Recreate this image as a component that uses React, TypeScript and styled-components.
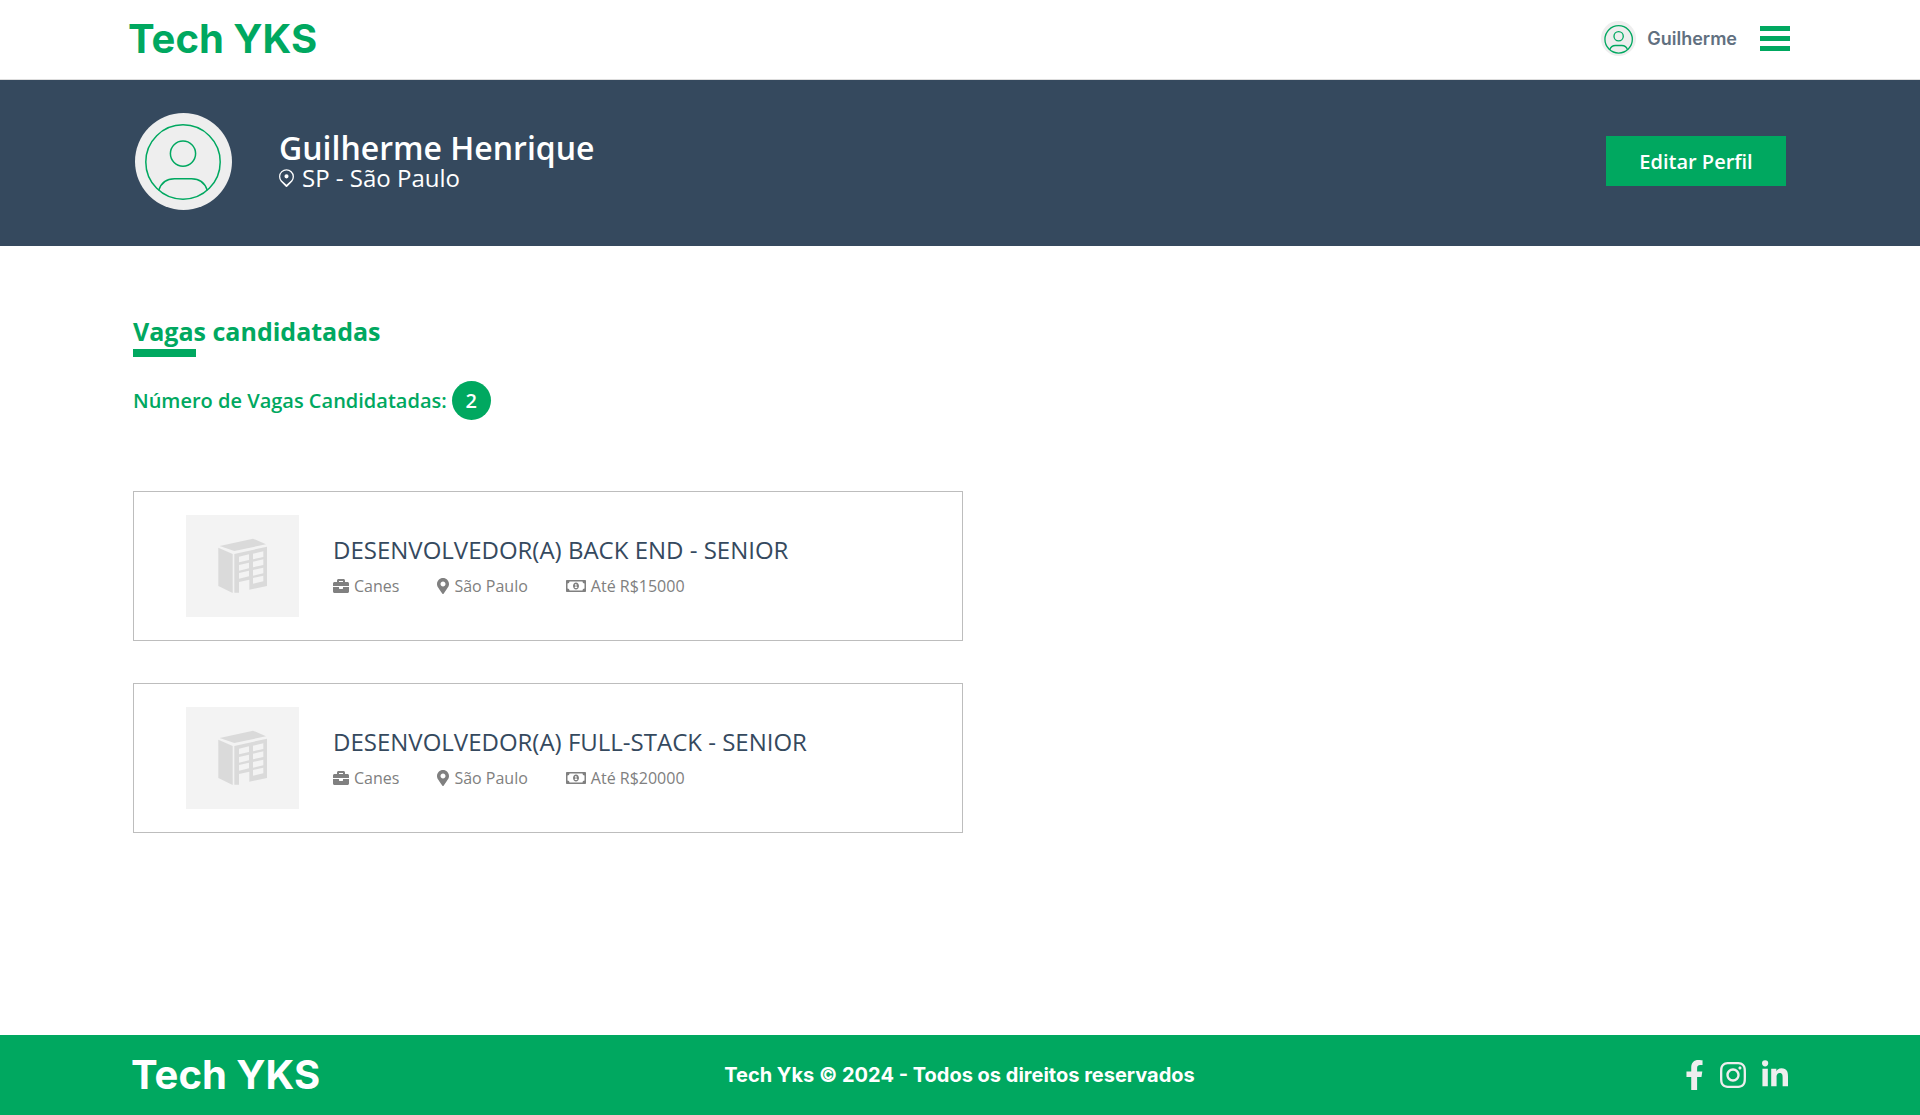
import React from "react";
import styled, { createGlobalStyle } from "styled-components";
import {
  FaBriefcase,
  FaFacebookF,
  FaInstagram,
  FaLinkedinIn,
  FaMapMarkerAlt,
  FaRegMoneyBillAlt,
} from "react-icons/fa";

const colors = {
  green: "#00a860",
  navy: "#35495e",
  slate: "#617080",
  grey: "#808080",
  light: "#eeeeee",
  line: "#bdbdbd",
};

const GlobalStyle = createGlobalStyle`
  *, *::before, *::after { box-sizing: border-box; }
  body {
    margin: 0;
    background: #fff;
    font-family: "Open Sans", sans-serif;
  }
  h1, h2, h3, p, ul { margin: 0; padding: 0; }
  button { border: 0; padding: 0; font-family: inherit; cursor: pointer; }
  a { color: inherit; text-decoration: none; }
  svg { display: block; flex-shrink: 0; }
`;

const Page = styled.div`
  display: flex;
  flex-direction: column;
  min-height: 100vh;
`;

const Header = styled.header`
  display: flex;
  align-items: center;
  justify-content: space-between;
  height: 80px;
  padding: 0 130px 2px 128px;
  border-bottom: 1px solid #dddddd;
`;

const Logo = styled.a<{ $color: string }>`
  font: 700 40px/48px Inter, sans-serif;
  && { color: ${(p) => p.$color}; }
`;

const UserMenu = styled.div`
  display: flex;
  align-items: center;
`;

const UserLink = styled.a`
  display: flex;
  align-items: center;
  gap: 11px;
  margin-right: 23px;
  font: 600 18px/24px Inter, sans-serif;
  && { color: ${colors.slate}; }
`;

const AvatarCircle = styled.span<{ $size: number }>`
  display: flex;
  align-items: center;
  justify-content: center;
  width: ${(p) => p.$size}px;
  height: ${(p) => p.$size}px;
  border-radius: 50%;
  background: ${colors.light};
`;

const MenuButton = styled.button`
  display: flex;
  flex-direction: column;
  gap: 5px;
  width: 30px;
  background: none;
`;

const MenuBar = styled.span`
  height: 5px;
  width: 100%;
  background: ${colors.green};
`;

const Banner = styled.section`
  display: flex;
  align-items: center;
  height: 166px;
  padding: 0 134px 4px 135px;
  background: ${colors.navy};
  color: #fff;
`;

const Identity = styled.div`
  flex: 1;
  margin-left: 47px;
  padding-top: 4px;
`;

const Name = styled.h1`
  font-size: 32px;
  font-weight: 600;
  line-height: 30px;
`;

const Place = styled.p`
  display: flex;
  align-items: center;
  gap: 8px;
  font-size: 24px;
  line-height: 30px;
`;

const EditButton = styled.button`
  width: 180px;
  height: 50px;
  background: ${colors.green};
  color: #fff;
  font-size: 20px;
  font-weight: 600;
`;

const Main = styled.main`
  flex: 1;
  padding: 68px 133px 80px;
`;

const Title = styled.h2`
  color: ${colors.green};
  font-size: 25px;
  font-weight: 700;
  line-height: 35px;

  &::after {
    content: "";
    display: block;
    width: 63px;
    height: 8px;
    background: ${colors.green};
  }
`;

const Counter = styled.p`
  display: flex;
  align-items: center;
  gap: 5px;
  margin-top: 24px;
  color: ${colors.green};
  font-size: 20px;
  font-weight: 600;
  line-height: 28px;
`;

const Count = styled.span`
  display: flex;
  align-items: center;
  justify-content: center;
  width: 39px;
  height: 39px;
  border-radius: 50%;
  background: ${colors.green};
  color: #fff;
`;

const JobList = styled.ul`
  display: flex;
  flex-direction: column;
  gap: 42px;
  max-width: 830px;
  margin-top: 71px;
  list-style: none;
`;

const JobCard = styled.li`
  display: flex;
  align-items: center;
  gap: 34px;
  height: 150px;
  padding: 0 52px;
  border: 1px solid ${colors.line};
`;

const Thumb = styled.div`
  width: 113px;
  height: 102px;
  background: #f3f3f3;
`;

const JobTitle = styled.h3`
  color: ${colors.navy};
  font-size: 24px;
  font-weight: 400;
  line-height: 32px;
`;

const Details = styled.div`
  display: flex;
  gap: 38px;
  margin-top: 8px;
`;

const Detail = styled.p<{ $icon: number }>`
  display: flex;
  align-items: center;
  gap: 5px;
  color: ${colors.grey};
  font-size: 16px;
  line-height: 24px;

  svg { width: ${(p) => p.$icon}px; height: 16px; }
`;

const Footer = styled.footer`
  display: grid;
  grid-template-columns: 1fr auto 1fr;
  align-items: center;
  height: 80px;
  padding: 0 132px 0 131px;
  background: ${colors.green};
`;

const Copyright = styled.p`
  color: #fff;
  font: 700 20px/24px Inter, sans-serif;
`;

const Social = styled.nav`
  display: flex;
  justify-content: flex-end;
  gap: 16px;
  color: ${colors.light};
`;

const SocialLink = styled.a<{ $width: number }>`
  svg { width: ${(p) => p.$width}px; height: 30px; }
`;

function Person({ size, stroke }: { size: number; stroke: number }) {
  return (
    <svg
      width={size}
      height={size}
      viewBox="-37 -39 76 76"
      fill="none"
      stroke={colors.green}
      strokeWidth={stroke}
      overflow="visible"
      aria-hidden="true"
    >
      <circle r="37.2" cx="0" cy="0" />
      <circle r="12.6" cx="0" cy="-8.4" />
      <path d="M-24.3 28.4C-22 21-16 16.7-8.5 16.7H8.5C16 16.7 22 21 24.3 28.4" />
    </svg>
  );
}

function PlacePin() {
  return (
    <svg width="15" height="18" viewBox="1.5 0.3 13 15.7" fill="currentColor" aria-hidden="true">
      <path
        fillRule="evenodd"
        d="M11.8 3.3a5.1 5.1 0 0 1 .3 7L8 14.1 3.9 10.3a5.1 5.1 0 1 1 7.9-7zM13 11.2A6.5 6.5 0 1 0 3 11.2L7.2 15.600a1.100 1.100 0 0 0 1.600 0zM8 8.500a1.800 1.800 0 1 0 0-3.600 1.800 1.800 0 0 0 0 3.600z"
      />
    </svg>
  );
}

function Building() {
  return (
    <svg width="113" height="102" viewBox="198 105 339 306" aria-hidden="true">
      <g fill="#dadada">
        <path d="M299 198 399 176 438 193 343 213Z" />
        <path d="M295 203 338 222V339L295 318Z" />
        <path d="M343 222 441 200V318L388 329V299L357 306V338H343Z" />
      </g>
      <g fill="#f3f3f3">
        <path d="M357 230 387 223V240L357 247Z" />
        <path d="M357 255 387 248V265L357 272Z" />
        <path d="M357 279 387 272V289L357 296Z" />
        <path d="M399 221 430 214V231L399 238Z" />
        <path d="M399 245 430 238V255L399 262Z" />
        <path d="M399 270 430 263V280L399 287Z" />
        <path d="M399 294 430 287V304L399 311Z" />
      </g>
    </svg>
  );
}

const jobs = [
  { title: "DESENVOLVEDOR(A) BACK END - SENIOR", company: "Canes", city: "São Paulo", salary: "Até R$15000" },
  { title: "DESENVOLVEDOR(A) FULL-STACK - SENIOR", company: "Canes", city: "São Paulo", salary: "Até R$20000" },
];

export default function App() {
  return (
    <Page>
      <GlobalStyle />
      <Header>
        <Logo href="#" $color={colors.green}>Tech YKS</Logo>
        <UserMenu>
          <UserLink href="#">
            <AvatarCircle $size={35}>
              <Person size={28} stroke={3.6} />
            </AvatarCircle>
            Guilherme
          </UserLink>
          <MenuButton type="button" aria-label="Menu">
            <MenuBar />
            <MenuBar />
            <MenuBar />
          </MenuButton>
        </UserMenu>
      </Header>

      <Banner>
        <AvatarCircle $size={97}>
          <Person size={76} stroke={1.5} />
        </AvatarCircle>
        <Identity>
          <Name>Guilherme Henrique</Name>
          <Place>
            <PlacePin />
            SP - São Paulo
          </Place>
        </Identity>
        <EditButton type="button">Editar Perfil</EditButton>
      </Banner>

      <Main>
        <Title>Vagas candidatadas</Title>
        <Counter>
          Número de Vagas Candidatadas: <Count>{jobs.length}</Count>
        </Counter>
        <JobList>
          {jobs.map((job) => (
            <JobCard key={job.title}>
              <Thumb>
                <Building />
              </Thumb>
              <div>
                <JobTitle>{job.title}</JobTitle>
                <Details>
                  <Detail $icon={16}><FaBriefcase />{job.company}</Detail>
                  <Detail $icon={12}><FaMapMarkerAlt />{job.city}</Detail>
                  <Detail $icon={20}><FaRegMoneyBillAlt />{job.salary}</Detail>
                </Details>
              </div>
            </JobCard>
          ))}
        </JobList>
      </Main>

      <Footer>
        <Logo href="#" $color="#fff">Tech YKS</Logo>
        <Copyright>Tech Yks © 2024 - Todos os direitos reservados</Copyright>
        <Social>
          <SocialLink href="#" aria-label="Facebook" $width={19}><FaFacebookF /></SocialLink>
          <SocialLink href="#" aria-label="Instagram" $width={26}><FaInstagram /></SocialLink>
          <SocialLink href="#" aria-label="LinkedIn" $width={26}><FaLinkedinIn /></SocialLink>
        </Social>
      </Footer>
    </Page>
  );
}
